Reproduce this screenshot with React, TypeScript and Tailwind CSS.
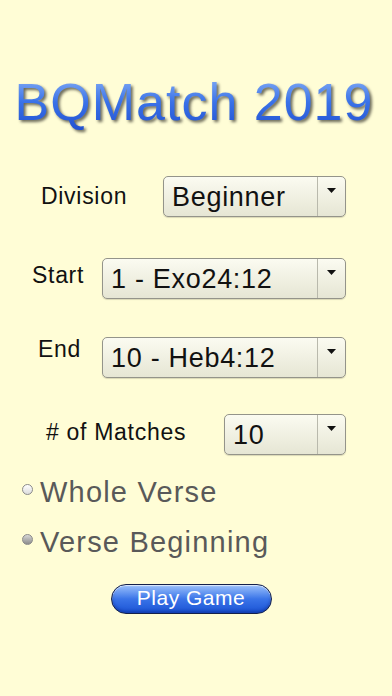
import React from "react";

const font = { fontFamily: '"Liberation Sans", Arial, sans-serif' };

function Select({ value, width }: { value: string; width: string }) {
  return (
    <div
      className={`${width} ml-auto flex h-[41px] rounded-[5px] border border-[#94948a] bg-gradient-to-b from-[#fbfbf1] to-[#e6e6d4] shadow-[0_1px_1px_rgba(0,0,0,0.15)]`}
    >
      <div className="flex flex-1 items-center pl-2 pt-[2px] text-[27px] leading-none tracking-[0.7px] text-[#111]">
        {value}
      </div>
      <div className="flex w-[28px] justify-center border-l border-[#b9b9ac] pt-[11px]">
        <svg width="9" height="5" viewBox="0 0 9 5">
          <path d="M0 0h9L4.5 5z" fill="#111" />
        </svg>
      </div>
    </div>
  );
}

function Row({
  label,
  value,
  pad,
  width,
  lift,
  mt,
}: {
  label: string;
  value: string;
  pad: string;
  width: string;
  lift: string;
  mt: string;
}) {
  return (
    <div className={`flex items-center ${pad} pr-[46px] ${mt}`}>
      <span className={`text-[23px] leading-none tracking-[0.7px] text-[#111] ${lift}`}>
        {label}
      </span>
      <Select value={value} width={width} />
    </div>
  );
}

function Radio({ label, selected }: { label: string; selected?: boolean }) {
  return (
    <div className="flex h-[36px] items-center pl-[22px]">
      <span
        className={`mb-[5px] mr-[7px] h-[11px] w-[11px] rounded-full border ${
          selected
            ? "border-[#8a8a8a] bg-gradient-to-b from-[#d8d8d8] to-[#8c8c8c]"
            : "border-[#8a8a8a] bg-gradient-to-b from-[#ffffff] to-[#dcdcdc]"
        }`}
      />
      <span className="text-[29px] leading-none tracking-[1.2px] text-[#595959]">{label}</span>
    </div>
  );
}

export default function App() {
  return (
    <div className="min-h-[696px] w-full bg-[#fffdd6] pt-[76px]" style={font}>
      <h1 className="pr-[4px] text-center text-[52px] leading-none tracking-[1px]">
        <span className="bg-gradient-to-b from-[#8fb4f6] via-[#3a72e8] to-[#2250d0] bg-clip-text text-transparent drop-shadow-[2px_2px_1.5px_rgba(0,0,0,0.6)]">
          BQMatch 2019
        </span>
      </h1>

      <Row label="Division" value="Beginner" pad="pl-[41px]" width="w-[183px]" lift="" mt="mt-[48px]" />
      <Row label="Start" value="1 - Exo24:12" pad="pl-[32px]" width="w-[244px]" lift="mb-[6px]" mt="mt-[41px]" />
      <Row label="End" value="10 - Heb4:12" pad="pl-[38px]" width="w-[244px]" lift="mb-[16px]" mt="mt-[38px]" />
      <Row label="# of Matches" value="10" pad="pl-[46px]" width="w-[122px]" lift="mb-[4px]" mt="mt-[36px]" />

      <div className="mt-[19px] flex flex-col gap-[14px]">
        <Radio label="Whole Verse" />
        <Radio label="Verse Beginning" selected />
      </div>

      <div className="mt-[24px] flex justify-center pr-[10px]">
        <button className="relative flex h-[30px] w-[161px] items-center justify-center overflow-hidden rounded-full border-[1.5px] border-[#14204a] bg-gradient-to-b from-[#9cc0fa] via-[#3a74e8] to-[#1a52d4] pb-[3px] text-[21px] leading-none tracking-[0.5px] text-white shadow-[inset_0_1px_1px_rgba(255,255,255,0.7),inset_0_-2px_3px_rgba(10,40,140,0.5)]">
          Play Game
        </button>
      </div>
    </div>
  );
}
